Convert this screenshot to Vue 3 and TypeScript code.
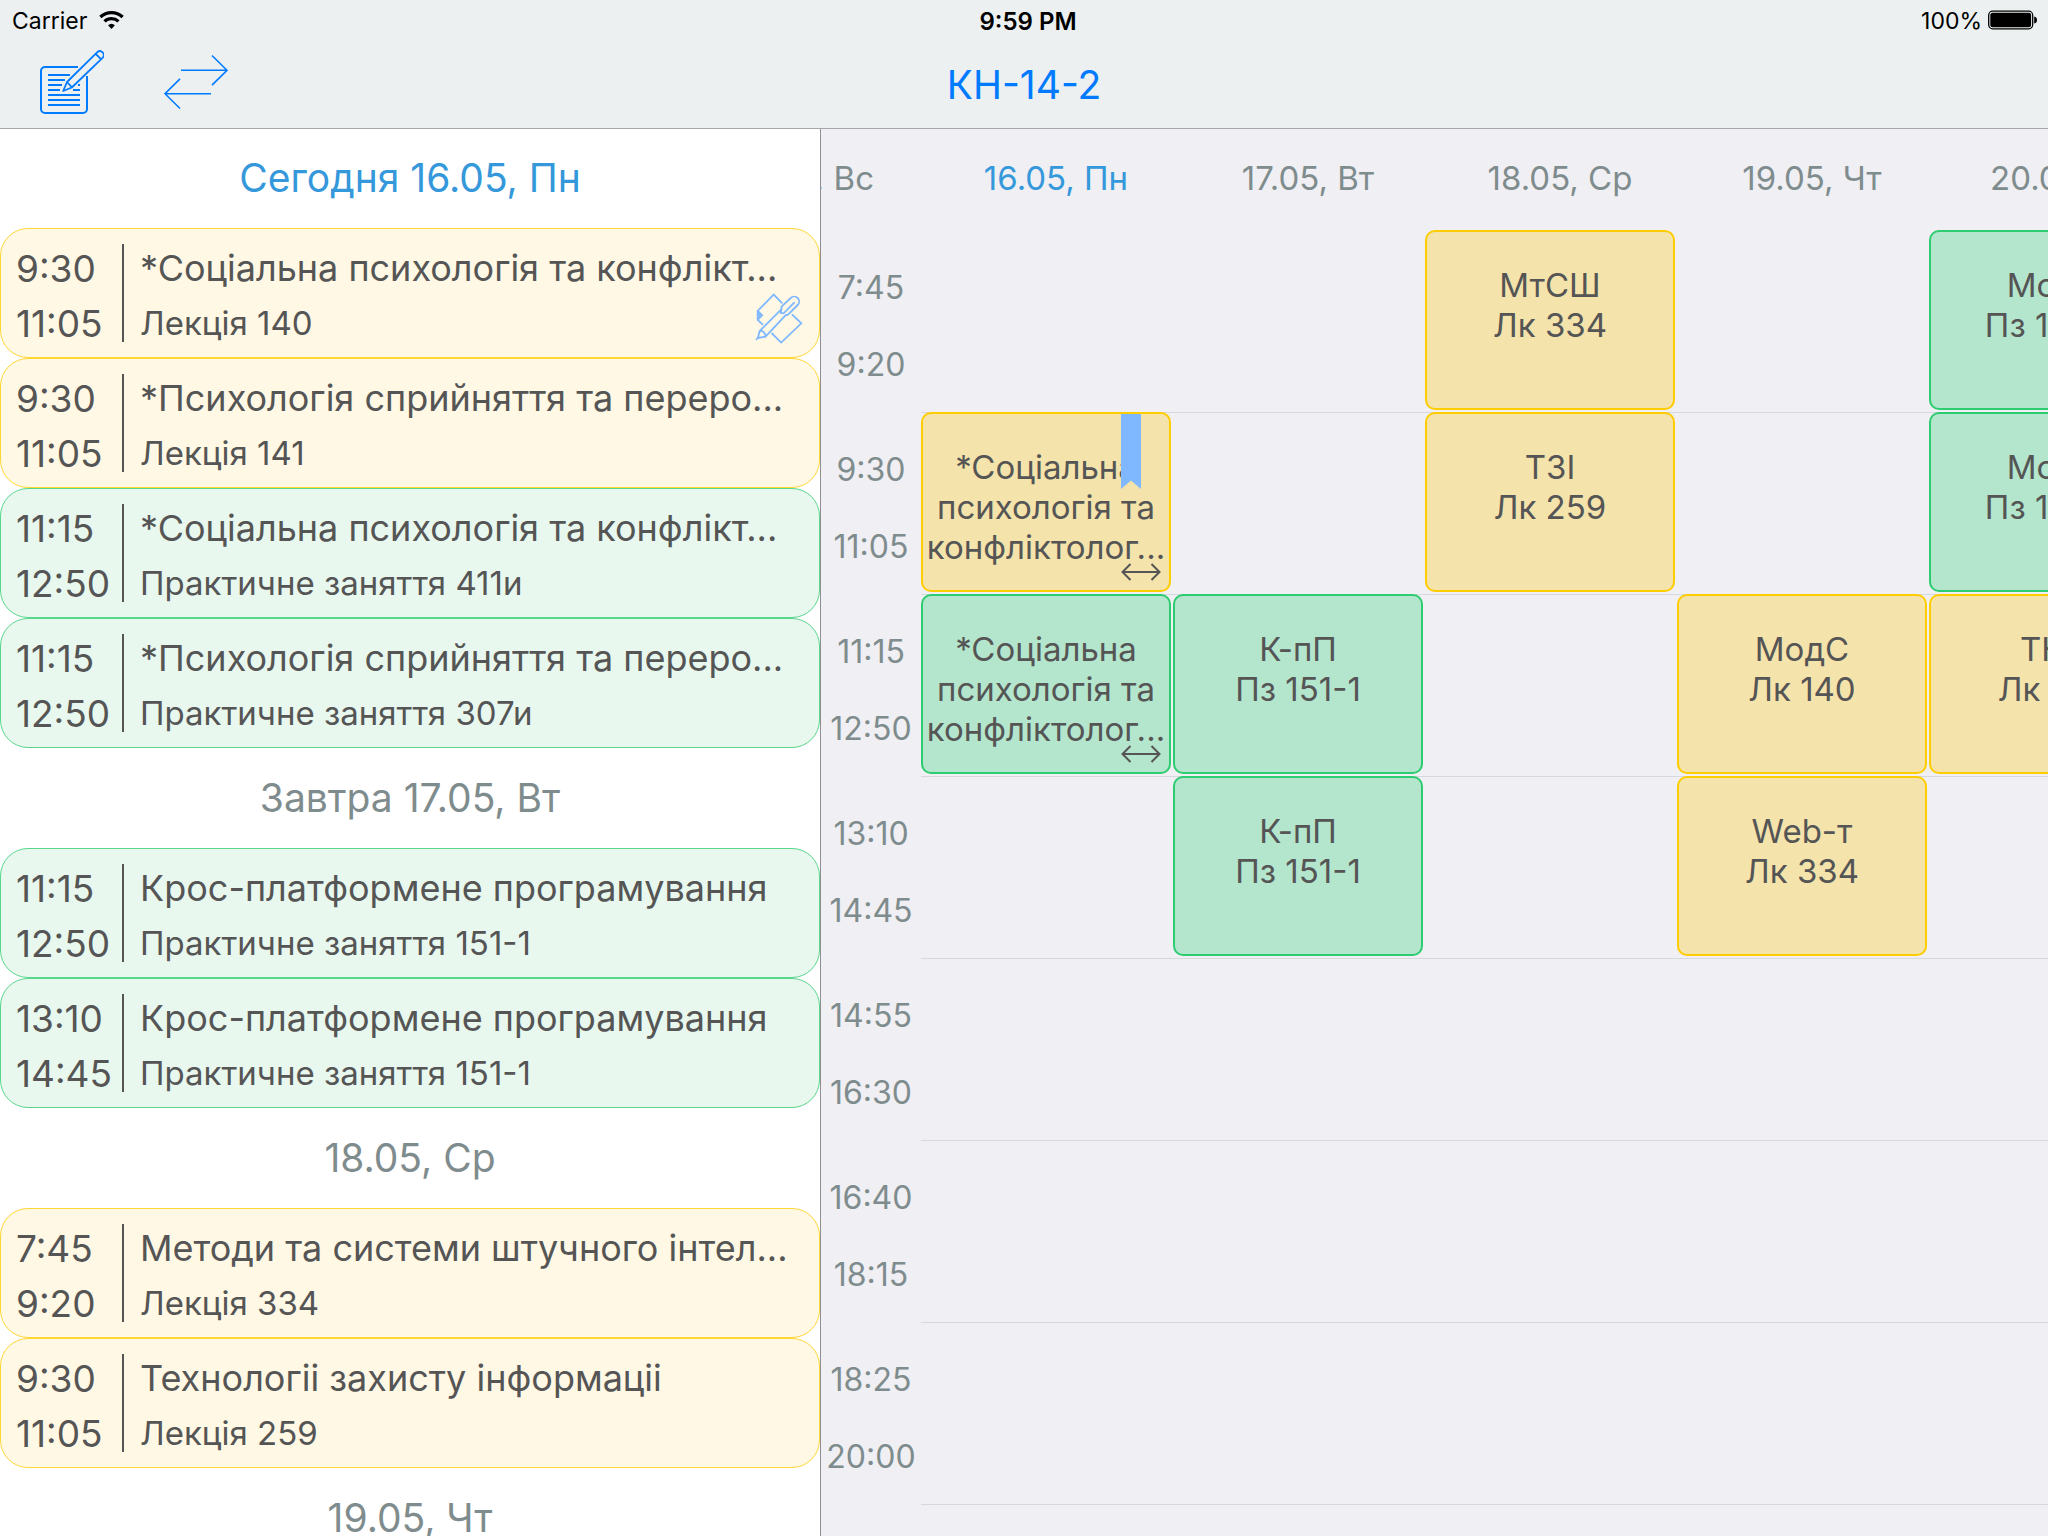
<script setup lang="ts">
type Kind = 'lecture' | 'practice'

interface Lesson {
  start: string
  end: string
  title: string
  place: string
  kind: Kind
  note?: boolean
}

interface Day {
  label: string
  today?: boolean
  lessons: Lesson[]
}

interface Slot {
  lines: string[]
  kind: Kind
  bookmarked?: boolean
  multiple?: boolean
}

interface Row {
  start: string
  end: string
  slots: (Slot | null)[]
}

const group = 'КН-14-2'

const days: Day[] = [
  {
    label: 'Сегодня 16.05, Пн',
    today: true,
    lessons: [
      { start: '9:30', end: '11:05', title: '*Соціальна психологія та конфлікт...', place: 'Лекція 140', kind: 'lecture', note: true },
      { start: '9:30', end: '11:05', title: '*Психологія сприйняття та переро...', place: 'Лекція 141', kind: 'lecture' },
      { start: '11:15', end: '12:50', title: '*Соціальна психологія та конфлікт...', place: 'Практичне заняття 411и', kind: 'practice' },
      { start: '11:15', end: '12:50', title: '*Психологія сприйняття та переро...', place: 'Практичне заняття 307и', kind: 'practice' },
    ],
  },
  {
    label: 'Завтра 17.05, Вт',
    lessons: [
      { start: '11:15', end: '12:50', title: 'Крос-платформене програмування', place: 'Практичне заняття 151-1', kind: 'practice' },
      { start: '13:10', end: '14:45', title: 'Крос-платформене програмування', place: 'Практичне заняття 151-1', kind: 'practice' },
    ],
  },
  {
    label: '18.05, Ср',
    lessons: [
      { start: '7:45', end: '9:20', title: 'Методи та системи штучного інтел...', place: 'Лекція 334', kind: 'lecture' },
      { start: '9:30', end: '11:05', title: 'Технологіі захисту інформаціі', place: 'Лекція 259', kind: 'lecture' },
    ],
  },
  { label: '19.05, Чт', lessons: [] },
]

const columns = ['16.05, Пн', '17.05, Вт', '18.05, Ср', '19.05, Чт', '20.05, Пт']

const lec = (...lines: string[]): Slot => ({ lines, kind: 'lecture' })
const prac = (...lines: string[]): Slot => ({ lines, kind: 'practice' })
const psychology = ['*Соціальна', 'психологія та', 'конфліктолог...']

const rows: Row[] = [
  { start: '7:45', end: '9:20', slots: [null, null, lec('МтСШ', 'Лк 334'), null, prac('МодС', 'Пз 165-2')] },
  {
    start: '9:30',
    end: '11:05',
    slots: [
      { lines: psychology, kind: 'lecture', bookmarked: true, multiple: true },
      null,
      lec('ТЗІ', 'Лк 259'),
      null,
      prac('МодС', 'Пз 165-2'),
    ],
  },
  {
    start: '11:15',
    end: '12:50',
    slots: [
      { lines: psychology, kind: 'practice', multiple: true },
      prac('К-пП', 'Пз 151-1'),
      null,
      lec('МодС', 'Лк 140'),
      lec('ТКП', 'Лк 259'),
    ],
  },
  { start: '13:10', end: '14:45', slots: [null, prac('К-пП', 'Пз 151-1'), null, lec('Web-т', 'Лк 334'), null] },
  { start: '14:55', end: '16:30', slots: [] },
  { start: '16:40', end: '18:15', slots: [] },
  { start: '18:25', end: '20:00', slots: [] },
  { start: '', end: '', slots: [] },
]
</script>

<template>
  <div class="app">
    <header class="top">
      <div class="status">
        <div class="carrier">
          <span class="status-text">Carrier</span>
          <svg width="26" height="20" viewBox="100 10 26 20" fill="none" stroke="#000" stroke-width="3.3">
            <path d="M101.4 17A16.4 16.4 0 0 1 123.6 17M105.5 21.4A10.4 10.4 0 0 1 119.5 21.4" />
            <path d="M109.1 25.3A5 5 0 0 1 115.9 25.3L112.5 29Z" fill="#000" stroke="none" />
          </svg>
        </div>
        <span class="status-text clock">9:59 PM</span>
        <div class="battery">
          <span class="status-text">100%</span>
          <svg width="50" height="20" viewBox="0 0 50 20">
            <rect x=".7" y="1.2" width="44" height="17.6" rx="4" fill="none" stroke="#000" stroke-width="1.3" />
            <rect x="2.3" y="2.8" width="40.8" height="14.4" rx="2.5" />
            <path d="M46.2 6.5q2.8.5 2.8 3.5t-2.8 3.5z" />
          </svg>
        </div>
      </div>
      <nav class="toolbar">
        <div class="actions">
          <button type="button" class="action" aria-label="Заметки">
            <svg width="64" height="64" viewBox="40 50 64 64" fill="none" stroke="#007aff" stroke-width="2">
              <path d="M78 67H45a4 4 0 0 0-4 4v38a4 4 0 0 0 4 4h38a4 4 0 0 0 4-4V76" />
              <path d="M48 75h22M48 80h17M48 85h14M48 90h12M73 90h7M78 85h2M48 95h32M48 100h32M48 105h32" />
              <path d="M67 82 97.3 52.2a3.9 3.9 0 0 1 5.5 5.5L71.8 87.5 63.2 91ZM67 82l5 5.4M95.3 53.5l5.7 5.7" stroke-width="1.8" stroke-linejoin="round" />
            </svg>
          </button>
          <button type="button" class="action" aria-label="Сменить группу">
            <svg width="64" height="64" viewBox="164 50 64 64" fill="none" stroke="#007aff" stroke-width="1.6">
              <path d="M181 70.3h46M212 55.5l15 14.8-15 14.8M211 93.7h-46M180 78.9l-15 14.8 15 14.8" />
            </svg>
          </button>
        </div>
        <h1 class="group">{{ group }}</h1>
      </nav>
    </header>

    <main class="body">
      <aside class="agenda">
        <section v-for="day in days" :key="day.label">
          <h2 class="day-title" :class="{ today: day.today }">{{ day.label }}</h2>
          <article v-for="(l, i) in day.lessons" :key="i" class="lesson" :class="l.kind">
            <div class="times">
              <span>{{ l.start }}</span>
              <span>{{ l.end }}</span>
            </div>
            <div class="info">
              <span class="title">{{ l.title }}</span>
              <span class="place">{{ l.place }}</span>
            </div>
            <svg v-if="l.note" class="note" width="48" height="51" viewBox="0 0 48 51" fill="none" stroke="#80b8ff" stroke-width="1.8">
              <path d="M27.3 10.4 18.7 1.6 2.7 17.8V26.8L8 31.8M2.7 18 7.2 22.3 2.7 26.8M4.6 19.4v4.8M37 21.3l9.3 9L26.2 49.6 16.5 40" />
              <path d="M1 46.9 2.8 45 4.7 38 26.5 16.2V13.6L35.7 5a4.9 4.9 0 0 1 7 7L33 21.6 30.5 22.4 10.5 43.6 2.8 45M4.7 38C8 37.6 10.8 40.4 10.5 43.6M26.5 16.2 25.8 20 28.6 20.4 39.7 9.2" />
            </svg>
          </article>
        </section>
      </aside>

      <section class="week">
        <div class="week-head">
          <div class="column-prev">15.05, Вс</div>
          <div v-for="(c, i) in columns" :key="c" class="column" :class="{ today: i === 0 }">{{ c }}</div>
        </div>
        <div v-for="(row, r) in rows" :key="r" class="row">
          <div class="hours">
            <span>{{ row.start }}</span>
            <span>{{ row.end }}</span>
          </div>
          <div class="slots">
            <div v-for="(slot, s) in row.slots" :key="s" class="slot">
              <div v-if="slot" class="event" :class="slot.kind">
                <span v-for="line in slot.lines" :key="line">{{ line }}</span>
                <svg v-if="slot.bookmarked" class="bookmark" width="20" height="75" viewBox="0 0 20 75">
                  <path d="M0 0h20v75l-10-8.5L0 75z" fill="#80b8ff" />
                </svg>
                <svg v-if="slot.multiple" class="arrows" width="40" height="18" viewBox="0 0 40 18" fill="none" stroke="#555" stroke-width="2">
                  <path d="M1.5 9h37M9.5 1 1.5 9l8 8M30.5 1l8 8-8 8" />
                </svg>
              </div>
            </div>
          </div>
        </div>
      </section>
    </main>
  </div>
</template>

<style>
body {
  margin: 0;
  overflow: hidden;
}
</style>

<style scoped>
.app {
  display: flex;
  flex-direction: column;
  height: 100vh;
  overflow: hidden;
  background: #fff;
  color: #555;
  font-family: Inter, "Liberation Sans", sans-serif;
}
.top {
  position: relative;
  flex: none;
  background: #ecf0f1;
  box-shadow: 0 1px 0 #a7a7ab;
}
.status {
  display: grid;
  grid-template-columns: 1fr auto 1fr;
  align-items: center;
  height: 40px;
  padding: 0 10px 0 12px;
  font-size: 23px;
  color: #000;
}
.status-text {
  padding-top: 2px;
}
.carrier,
.battery {
  display: flex;
  align-items: center;
  gap: 12px;
}
.battery {
  justify-content: flex-end;
  gap: 6px;
}
.clock {
  padding-left: 6px;
  font-size: 24px;
  font-weight: 600;
}
.toolbar {
  display: grid;
  grid-template-columns: 1fr auto 1fr;
  align-items: center;
  height: 88px;
  padding: 0 40px;
}
.actions {
  display: flex;
  gap: 60px;
  padding-bottom: 4px;
}
.action {
  padding: 0;
  border: 0;
  background: none;
}
.action svg {
  display: block;
}
.group {
  margin: 0;
  font-size: 39px;
  font-weight: 400;
  color: #007aff;
}
.body {
  display: flex;
  flex: 1;
  min-height: 0;
}
.agenda {
  flex: 0 0 820px;
  border-right: 1px solid #8e8e93;
  overflow: hidden;
}
.day-title {
  margin: 0;
  height: 100px;
  line-height: 100px;
  text-align: center;
  font-size: 39px;
  font-weight: 400;
  color: #7f8c8d;
}
.day-title.today,
.column.today {
  color: #3498db;
}
.lesson {
  position: relative;
  display: flex;
  align-items: center;
  box-sizing: border-box;
  height: 130px;
  padding-left: 15px;
  border: 1px solid;
  border-radius: 28px;
  line-height: 55px;
}
.lesson.lecture {
  background: #fff8e5;
  border-color: #ffd633;
}
.lesson.practice {
  background: #e8f8ee;
  border-color: #57d68c;
}
.times {
  display: flex;
  flex-direction: column;
  justify-content: center;
  box-sizing: border-box;
  width: 108px;
  height: 98px;
  padding-top: 5px;
  border-right: 2px solid #555;
  font-size: 37px;
}
.info {
  display: flex;
  flex-direction: column;
  padding: 5px 0 0 16px;
  white-space: nowrap;
}
.title {
  font-size: 36px;
}
.place {
  font-size: 33px;
}
.note {
  position: absolute;
  right: 16px;
  bottom: 13px;
}
.week {
  flex: 1;
  min-width: 0;
  overflow: hidden;
  background: #efeff4;
}
.week-head {
  display: flex;
  height: 102px;
  line-height: 100px;
  font-size: 33px;
  color: #7f8c8d;
  white-space: nowrap;
}
.column-prev {
  display: flex;
  flex: none;
  justify-content: flex-end;
  box-sizing: border-box;
  width: 109px;
  padding-right: 56px;
}
.column {
  flex: none;
  width: 252px;
  text-align: center;
}
.row {
  display: flex;
  height: 182px;
}
.hours {
  display: flex;
  flex: none;
  flex-direction: column;
  box-sizing: border-box;
  width: 100px;
  padding-top: 19px;
  text-align: center;
  line-height: 77px;
  font-size: 32px;
  color: #7f8c8d;
}
.slots {
  display: flex;
  flex: 1;
  min-width: 0;
}
.row + .row .slots {
  box-shadow: inset 0 1px 0 #d5d9de;
}
.slot {
  flex: none;
  width: 252px;
}
.event {
  position: relative;
  display: flex;
  flex-direction: column;
  align-items: center;
  box-sizing: border-box;
  width: 250px;
  height: 180px;
  padding-top: 33px;
  border: 2px solid;
  border-radius: 10px;
  font-size: 33px;
  line-height: 40px;
  white-space: nowrap;
}
.event.lecture {
  background: #f4e3ab;
  border-color: #fc0;
}
.event.practice {
  background: #b4e5cd;
  border-color: #2ecc71;
}
.bookmark {
  position: absolute;
  top: 0;
  right: 28px;
}
.arrows {
  position: absolute;
  right: 8px;
  bottom: 9px;
}
</style>
